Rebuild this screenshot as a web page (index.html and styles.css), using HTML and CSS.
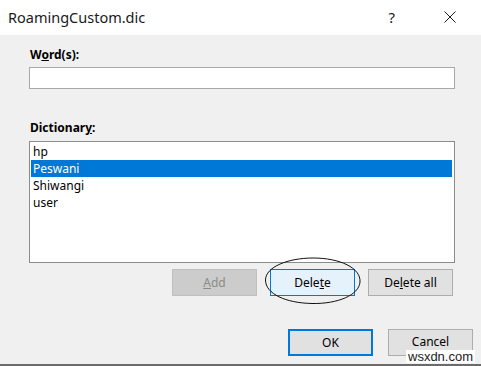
FILE: index.html
```html
<!DOCTYPE html>
<html lang="en">
<head>
  <meta charset="UTF-8" />
  <title>RoamingCustom.dic</title>
  <link rel="stylesheet" href="styles.css">
</head>
<body>
  <div class="dialog">
    <div class="titlebar">
      <span class="title">RoamingCustom.dic</span>
      <span class="help">?</span>
      <svg class="close" viewBox="0 0 12 12" width="12" height="12">
        <path d="M0.5 0.5 L11.5 11.5 M11.5 0.5 L0.5 11.5" stroke="#1a1a1a" stroke-width="1" fill="none" />
      </svg>
    </div>
    <div class="content">
      <label class="field-label">W<u>o</u>rd(s):</label>
      <input type="text" class="word-input" />
      <label class="field-label dict-label">Dictionar<u>y</u>:</label>
      <ul class="word-list">
        <li>hp</li>
        <li class="selected">Peswani</li>
        <li>Shiwangi</li>
        <li>user</li>
      </ul>
      <div class="list-actions">
        <button class="btn disabled"><u>A</u>dd</button>
        <button class="btn focused">Dele<u>t</u>e</button>
        <button class="btn">De<u>l</u>ete all</button>
      </div>
    </div>
    <div class="footer">
      <button class="btn default">OK</button>
      <button class="btn cancel">Cancel</button>
    </div>
    <svg class="circle-mark" viewBox="0 0 98 48" width="98" height="48">
      <path d="M49 1 C 76 1, 97 11, 96 25 C 95 38, 74 47, 48 46.5 C 22 46, 1.5 37, 1.5 23 C 1.5 10, 24 1, 49 1 Z" stroke="#111" stroke-width="1" fill="none" />
    </svg>
    <span class="watermark">wsxdn.com</span>
  </div>
</body>
</html>
```

FILE: styles.css
```css
body {
  margin: 0;
  padding: 0;
  font-family: 'Noto Sans', 'Open Sans', sans-serif;
  font-size: 12px;
  color: #000;
  background: #f0f0f0;
}
.dialog {
  position: relative;
  width: 481px;
  height: 366px;
  background: #f0f0f0;
  border-bottom: 2px solid #6b6b6b;
  box-sizing: border-box;
  overflow: hidden;
}
.titlebar {
  height: 35px;
  background: #fff;
  display: flex;
  align-items: center;
  padding-left: 8px;
}
.title {
  font-size: 14.5px;
  color: #1a1a1a;
  flex: 1;
  margin-top: -1px;
}
.help {
  font-size: 15px;
  color: #1a1a1a;
  margin-right: 49px;
  margin-top: -2px;
}
.close {
  margin-right: 25px;
  margin-top: -1px;
}
.content {
  display: flex;
  flex-direction: column;
  padding: 0 26px 0 29px;
}
.field-label {
  font-weight: bold;
  font-size: 12px;
  line-height: 16px;
  margin-top: 12px;
  margin-left: 1px;
  height: 16px;
}
.word-input {
  margin-top: 4px;
  height: 22px;
  border: 1px solid #a8a8a8;
  background: #fff;
  box-sizing: border-box;
  padding: 0;
}
.dict-label {
  margin-top: 31px;
}
.word-list {
  list-style: none;
  margin: 5px 0 0;
  padding: 1px 2px 0 1px;
  height: 122px;
  box-sizing: border-box;
  background: #fff;
  border: 1px solid #8c8c8c;
}
.word-list li {
  height: 17px;
  line-height: 17px;
  padding-left: 2px;
}
.word-list li.selected {
  background: #0078d7;
  color: #fff;
}
.list-actions {
  display: flex;
  justify-content: flex-end;
  gap: 13px;
  margin-top: 6px;
  padding-right: 2px;
}
.btn {
  width: 85px;
  height: 27px;
  box-sizing: border-box;
  font-family: 'Noto Sans', 'Open Sans', sans-serif;
  font-size: 12px;
  line-height: 14px;
  color: #000;
  background: #e1e1e1;
  border: 1px solid #adadad;
  padding: 0;
}
.btn.disabled {
  background: #cccccc;
  border-color: #bfbfbf;
  color: #8a8a8a;
}
.btn.focused {
  background: #e5f1fb;
  border-color: #0078d7;
}
.btn.default {
  border: 2px solid #0078d7;
}
.btn.cancel {
  padding-bottom: 2px;
}
.footer {
  display: flex;
  justify-content: flex-end;
  gap: 15px;
  margin-top: 33px;
  padding-right: 8px;
}
.circle-mark {
  position: absolute;
  left: 264px;
  top: 257px;
}
.watermark {
  position: absolute;
  left: 406px;
  top: 350px;
  background: #fff;
  color: #222;
  font-family: 'Liberation Sans', sans-serif;
  font-size: 13px;
  line-height: 13px;
  padding: 0 2px;
}
```
